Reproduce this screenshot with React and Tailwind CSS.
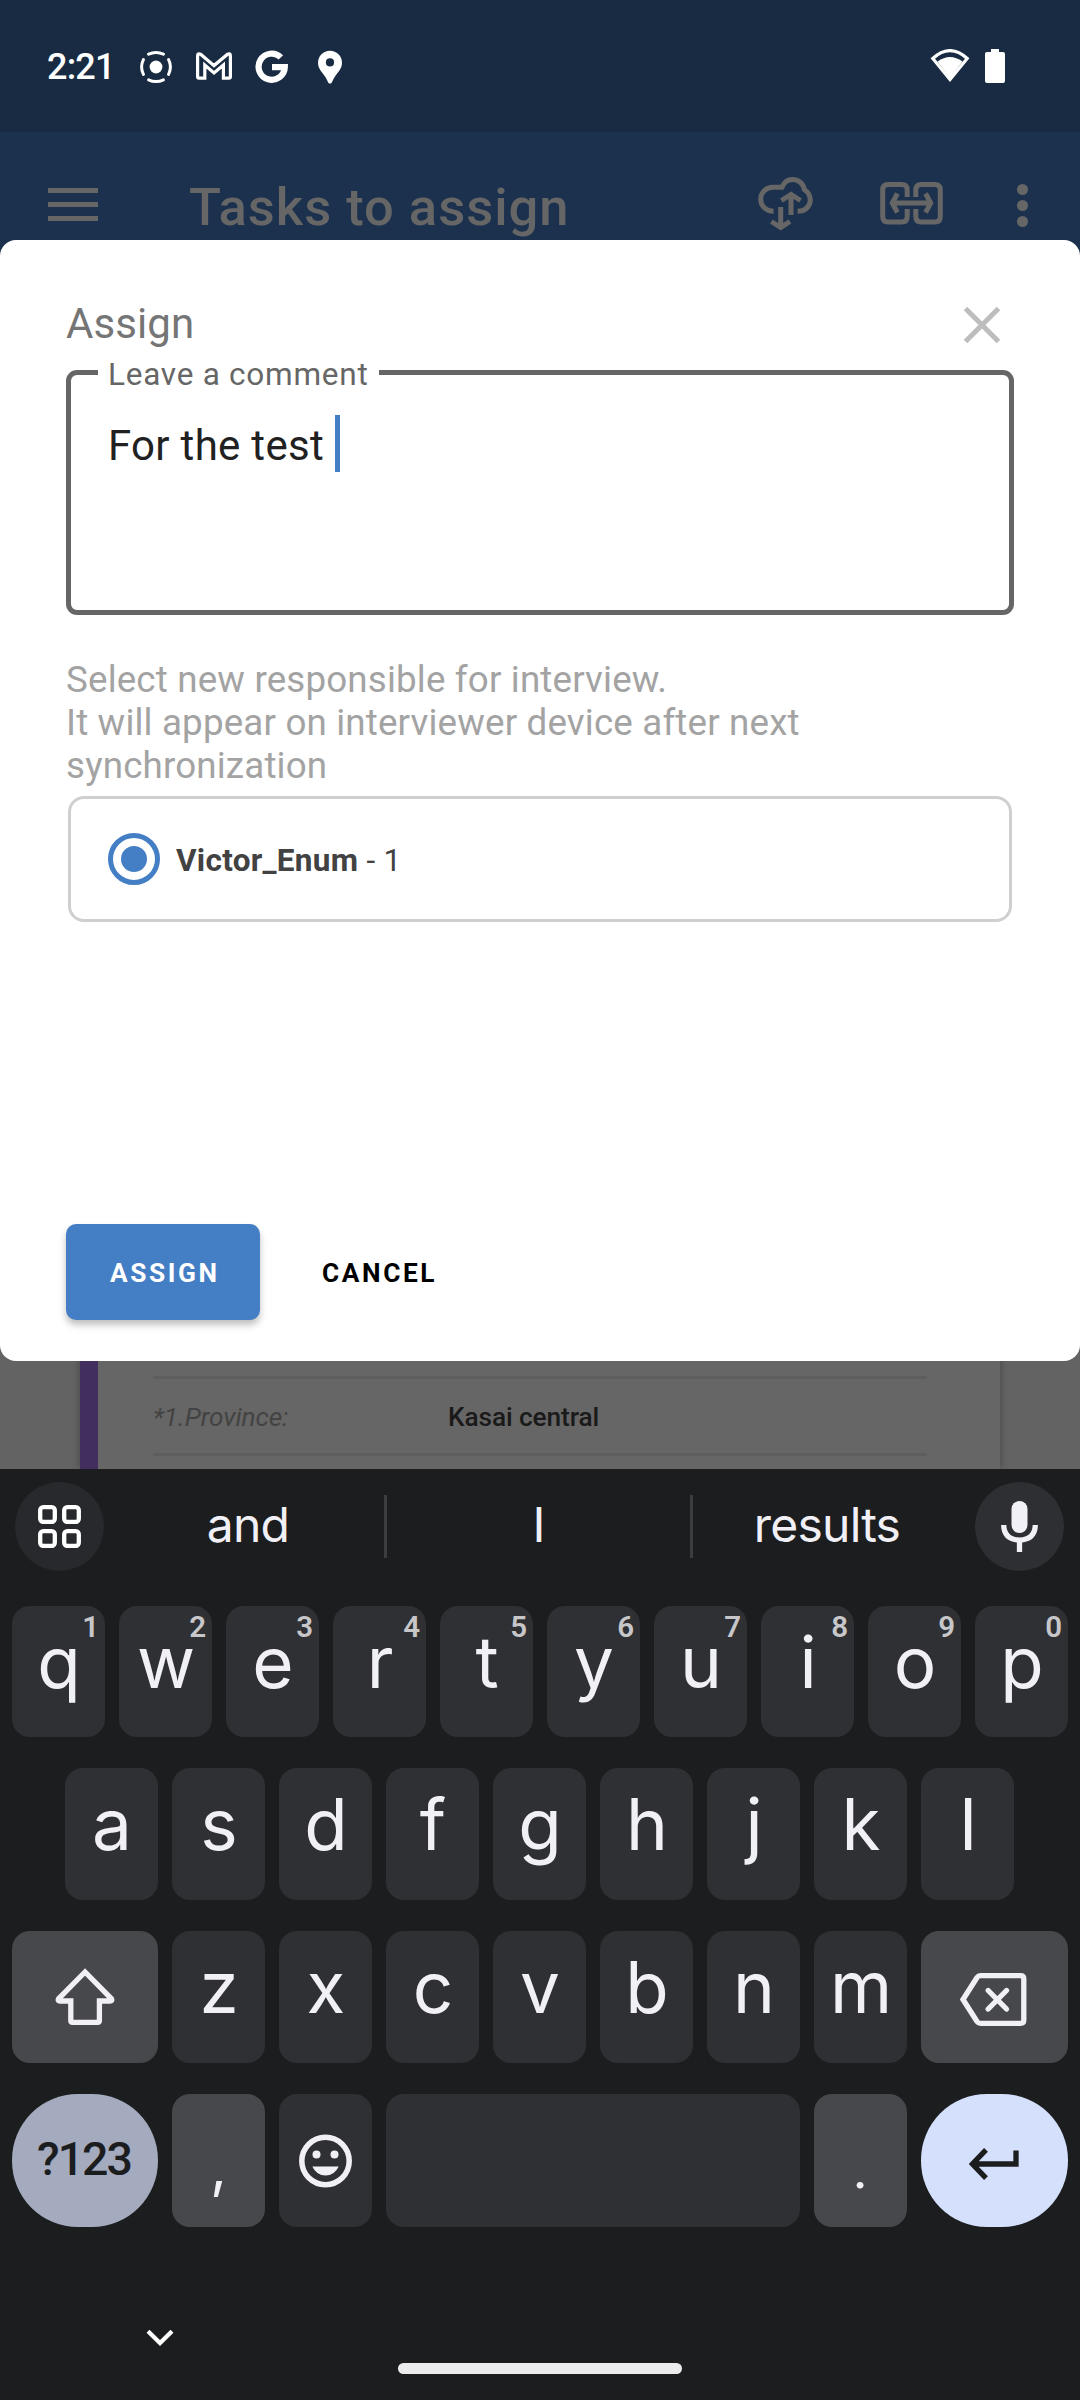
import React from "react";

function StatusBar() {
  return (
    <div className="flex h-[132px] items-start bg-[#182b42] pl-[47px] pr-[75px] text-white">
      <span className="mt-[44px] w-[93px] whitespace-nowrap text-[36px] font-medium leading-[46px] tracking-[-0.8px]">2:21</span>
      <svg className="mt-[50px] h-[34px] w-[34px]" viewBox="0 0 34 34" fill="none">
        <circle cx="16" cy="17" r="6.4" fill="#fff" />
        <path
          d="M8.6 4.2Q16 0.6 23.4 4.2M8.6 29.8Q16 33.4 23.4 29.8M3.4 9.6Q-0.2 17 3.4 24.4M28.6 9.6Q32.2 17 28.6 24.4"
          stroke="#fff"
          strokeWidth="3"
          strokeLinecap="round"
        />
      </svg>
      <svg className="ml-[22px] mt-[52px] h-7 w-9" viewBox="0 0 36 28" fill="none" stroke="#fff" strokeWidth="3.2">
        <path d="M1.6 4Q1.6 0.8 4.6 2.2L18 13.6L31.6 2.2Q34.4 0.8 34.4 4V24.8Q34.4 26.2 33 26.2H27.4V13L18 21L8.8 13V26.2H2.9Q1.6 26.2 1.6 24.8Z" />
      </svg>
      <svg className="ml-[23px] mt-[50px] h-[34px] w-[34px]" viewBox="0 0 34 34" fill="none" stroke="#fff" strokeWidth="6.2">
        <path d="M25.9 7.4A13.1 13.1 0 1 0 29.8 17.1H17" />
      </svg>
      <svg className="ml-[29px] mt-[50px] h-[34px] w-[24px]" viewBox="0 0 24 34" fill="#fff">
        <path
          fillRule="evenodd"
          d="M12 0.8A12 12 0 0 0 0 12.8C0 19 4.5 22.5 7 26.5C9 29.6 9.5 31.5 10.5 33Q12 34 13.5 33C14.5 31.5 15 29.6 17 26.5C19.5 22.5 24 19 24 12.8A12 12 0 0 0 12 0.8ZM12 8.3A4.1 4.1 0 1 1 12 16.5A4.1 4.1 0 0 1 12 8.3Z"
        />
      </svg>
      <svg className="ml-auto mt-[49px] h-[33px] w-10" viewBox="0 0 40 33" fill="none">
        <path d="M2.8 9.5Q20 -6.2 37.2 9.5L20 30.500Z" stroke="#fff" strokeWidth="3.2" />
        <path d="M7.5 12.5Q20 3.5 32.5 12.5L20 29Z" fill="#fff" />
      </svg>
      <svg className="ml-[15px] mt-[49px] h-[34px] w-5" viewBox="0 0 20 34" fill="#fff">
        <path d="M6 0H14V3H18Q20 3 20 5V32Q20 34 18 34H2Q0 34 0 32V5Q0 3 2 3H6Z" />
      </svg>
    </div>
  );
}

function AppBar() {
  return (
    <div className="flex h-[147px] items-start bg-[#1c314e] pl-12 pr-[52px] text-[#666]">
      <div className="mt-[56px] flex w-[50px] flex-col gap-[9px]">
        <div className="h-[5px] bg-[#666]" />
        <div className="h-[5px] bg-[#666]" />
        <div className="h-[5px] bg-[#666]" />
      </div>
      <h1 className="ml-[91px] mt-[45px] whitespace-nowrap text-[52.5px] font-medium leading-[60px] tracking-[0.98px]">
        Tasks to assign
      </h1>
      <svg className="ml-auto mt-[45px] h-[54px] w-14" viewBox="0 0 56 54" fill="none" stroke="#666" strokeWidth="5">
        <path d="M15.5 34.3C8 34.3 2.7 29 2.7 22.2C2.7 15.5 8 10.3 15 10.3H24C26 5.5 30 2.5 34.5 2.5C40 2.5 45.5 6.5 46.3 12.5C50 15 52.3 18.5 52.3 23C52.3 29.5 47 34.3 39.6 34.3" />
        <path d="M33 38V18M23.4 23.5L33 17.5L42.5 23.5M22.7 30V50M13.4 44.5L22.7 50.5L32 44.5" />
      </svg>
      <svg className="ml-[66px] mt-[50px] h-[43px] w-[63px]" viewBox="0 0 63 43" fill="none" stroke="#666" strokeWidth="5">
        <path d="M27.2 15V8Q27.2 2.5 21.7 2.5H8.2Q2.7 2.5 2.7 8V34.5Q2.7 40 8.2 40H21.7Q27.2 40 27.2 34.5V27M35.8 15V8Q35.8 2.5 41.3 2.5H54.8Q60.3 2.5 60.3 8V34.5Q60.3 40 54.8 40H41.3Q35.8 40 35.8 34.5V27" />
        <path d="M12 21H51M17.4 11.5L12.3 21L17.4 30.5M45.6 11.5L50.7 21L45.6 30.5" />
      </svg>
      <div className="ml-[74px] mt-[52px] flex flex-col gap-[5px]">
        <div className="h-[11px] w-[11px] rounded-full bg-[#666]" />
        <div className="h-[11px] w-[11px] rounded-full bg-[#666]" />
        <div className="h-[11px] w-[11px] rounded-full bg-[#666]" />
      </div>
    </div>
  );
}

function TaskList() {
  return (
    <div className="flex h-[1190px] bg-[#636363] px-20">
      <div className="flex w-full border-l-[18px] border-[#422f60] bg-[#666] shadow-[0_0_8px_rgba(0,0,0,0.3)]">
        <div className="ml-[55px] mt-auto mb-[13px] flex h-[80px] w-[774px] items-center border-y-[3px] border-[#5e5e5e] pt-[2px] text-[26.25px] leading-[30px] tracking-[-0.1px]">
          <span className="w-[295px] italic text-[#434343]">*1.Province:</span>
          <span className="font-medium text-[#1a1a1a]">Kasai central</span>
        </div>
      </div>
    </div>
  );
}

function AssignDialog() {
  return (
    <div className="absolute left-0 top-[240px] flex h-[1121px] w-full flex-col rounded-2xl bg-white px-[66px]">
      <div className="mt-[59px] flex h-[71px] items-start">
        <h2 className="text-[42px] leading-[49px] tracking-[0.1px] text-[#757575]">Assign</h2>
        <svg className="ml-auto mr-[13px] mt-[7px] h-[38px] w-[38px]" viewBox="0 0 38 38" stroke="#bdbdbd" strokeWidth="5">
          <path d="M2.5 2.5L35.5 35.5M35.5 2.5L2.5 35.5" />
        </svg>
      </div>
      <div className="relative flex h-[245px] items-start rounded-[11px] border-[5px] border-[#666] pl-[37px] pt-10">
        <span className="absolute -top-[21px] left-[27px] w-[281px] whitespace-nowrap bg-white pl-[10px] text-[31.5px] leading-[41px] tracking-[0.75px] text-[#666]">
          Leave a comment
        </span>
        <span className="mt-[2px] whitespace-pre text-[42px] leading-[57px] tracking-[0.3px] text-[#212121]">For the test </span>
        <span className="h-[57px] w-[5px] bg-[#447fc5]" />
      </div>
      <p className="mt-[43px] w-[860px] text-[36.75px] leading-[43px] tracking-[0.16px] text-[#a3a3a3]">
        Select new responsible for interview.
        <br />
        It will appear on interviewer device after next synchronization
      </p>
      <div className="mx-[2px] mt-[9px] flex h-[126px] items-center rounded-2xl border-[3px] border-[#cfcfcf] pl-[37px]">
        <div className="flex h-[52px] w-[52px] items-center justify-center rounded-full border-[5px] border-[#447fc5]">
          <div className="h-[26px] w-[26px] rounded-full bg-[#447fc5]" />
        </div>
        <p className="ml-4 mt-[3px] text-[31.5px] leading-[37px] tracking-[0.28px] text-[#424242]">
          <b className="font-bold">Victor_Enum</b> - 1
        </p>
      </div>
      <div className="mt-auto mb-[41px] flex text-[26.25px] font-bold leading-[99px] tracking-[2.6px]">
        <div className="h-24 w-[194px] rounded-[10px] bg-[#447fc5] pl-11 text-white shadow-[0_5px_7px_rgba(0,0,0,0.25)]">ASSIGN</div>
        <div className="ml-[62px] h-24 text-black">CANCEL</div>
      </div>
    </div>
  );
}

function LetterKey({ letter, hint }) {
  return (
    <div className="relative h-full w-[93px] rounded-[18px] bg-[#2f3034] pl-px text-center font-['Inter',sans-serif] text-[71px] leading-[113px] text-[#f1f0f6]">
      {letter}
      {hint && (
        <span className="absolute right-[6px] top-1 font-['Roboto',sans-serif] text-[29.5px] font-semibold leading-[34px] text-[#c7c7c9]">
          {hint}
        </span>
      )}
    </div>
  );
}

function Keyboard() {
  return (
    <div className="flex h-[931px] flex-col bg-[#1c1d1e]">
      <div className="flex h-[115px] items-center pl-[15px] pr-4">
        <div className="flex h-[89px] w-[89px] shrink-0 items-center justify-center rounded-full bg-[#27292d]">
          <svg className="h-[43px] w-[43px]" viewBox="0 0 43 43" fill="none" stroke="#fff" strokeWidth="4.3">
            <rect x="2.2" y="2.2" width="14.6" height="14.6" rx="3" />
            <rect x="26.2" y="2.2" width="14.6" height="14.6" rx="3" />
            <rect x="2.2" y="26.2" width="14.6" height="14.6" rx="3" />
            <rect x="26.2" y="26.2" width="14.6" height="14.6" rx="3" />
          </svg>
        </div>
        <div className="flex min-w-0 flex-1 items-center text-center font-['Inter',sans-serif] text-[48px] leading-[60px] tracking-[-0.8px] text-[#f1f0f6]">
          <span className="-mt-[3px] w-[280px] pl-2">and</span>
          <div className="h-[63px] w-[3px] bg-[#3c3d40]" />
          <span className="-mt-[3px] w-[303px]">I</span>
          <div className="h-[63px] w-[3px] bg-[#3c3d40]" />
          <span className="-mt-[3px] w-[282px] pr-[14px]">results</span>
        </div>
        <div className="flex h-[89px] w-[89px] shrink-0 items-center justify-center rounded-full bg-[#2e2f33]">
          <svg className="h-[51px] w-[37px]" viewBox="0 0 37 51" fill="none" stroke="#f1f0f6" strokeWidth="5.3">
            <rect x="10.5" y="0" width="16" height="32" rx="8" fill="#f1f0f6" stroke="none" />
            <path d="M2.7 24Q3 38.5 18.5 39.2Q34 38.5 34.3 24M18.5 39V51" />
          </svg>
        </div>
      </div>

      <div className="mt-[22px] flex h-[131px] justify-center gap-[14px]">
        {"qwertyuiop".split("").map((c, i) => (
          <LetterKey key={c} letter={c} hint={String((i + 1) % 10)} />
        ))}
      </div>
      <div className="mt-[31px] flex h-[132px] justify-center gap-[14px] pr-px">
        {"asdfghjkl".split("").map((c) => (
          <LetterKey key={c} letter={c} />
        ))}
      </div>
      <div className="mt-[31px] flex h-[132px] justify-center gap-[14px]">
        <div className="flex w-[146px] items-center justify-center rounded-[18px] bg-[#47484b]">
          <svg className="h-[58px] w-[60px]" viewBox="0 0 60 58" fill="none" stroke="#f1f0f6" strokeWidth="5.3">
            <path d="M30 4L3.5 30.8Q2.5 33 5 33H15.8V52.5Q15.8 54.3 17.6 54.3H42.6Q44.4 54.3 44.4 52.5V33H55Q57.5 33 56.5 30.8Z" />
          </svg>
        </div>
        {"zxcvbnm".split("").map((c) => (
          <LetterKey key={c} letter={c} />
        ))}
        <div className="flex w-[147px] items-center justify-center rounded-[18px] bg-[#47484b] pr-[2px]">
          <svg className="mt-[5px] h-[53px] w-[67px]" viewBox="0 0 67 53" fill="none" stroke="#f1f0f6" strokeWidth="5.3">
            <path d="M3 26.5L17 4.5Q18.3 2.7 20.5 2.7H60.5Q63.8 2.7 63.8 6V47Q63.8 50.3 60.5 50.3H20.5Q18.3 50.3 17 48.5Z" />
            <path d="M28.2 17.5L46.5 36M46.5 17.5L28.2 36" strokeLinecap="round" />
          </svg>
        </div>
      </div>
      <div className="mt-[31px] flex h-[133px] justify-center gap-[14px] text-[#f1f0f6]">
        <div className="w-[146px] rounded-[66px] bg-[#a4abbf] pr-[2px] text-center text-[46.5px] font-medium leading-[130px] tracking-[-2px] text-[#1c1d1e]">
          ?123
        </div>
        <div className="w-[93px] rounded-[18px] bg-[#47484b] text-center font-['Inter',sans-serif] text-[58px] leading-[145px]">,</div>
        <div className="flex w-[93px] items-center justify-center rounded-[18px] bg-[#2f3034]">
          <svg className="h-[54px] w-[54px]" viewBox="0 0 54 54" fill="#f1f0f6">
            <circle cx="26.5" cy="27" r="23.7" fill="none" stroke="#f1f0f6" strokeWidth="5.5" />
            <circle cx="17.5" cy="20.5" r="4" />
            <circle cx="35.5" cy="20.5" r="4" />
            <path d="M13.3 32.5H39.7Q35.5 41.5 26.5 41.5T13.3 32.5Z" />
          </svg>
        </div>
        <div className="w-[414px] rounded-[18px] bg-[#2f3034]" />
        <div className="w-[93px] rounded-[18px] bg-[#47484b] text-center font-['Roboto',sans-serif] text-[60px] leading-[147px]">.</div>
        <div className="flex w-[147px] items-center justify-center rounded-[66px] bg-[#d5e1fc] pr-[2px]">
          <svg className="mt-[6px] h-8 w-[50px]" viewBox="0 0 50 32" fill="none" stroke="#1c1d1e" strokeWidth="5.3">
            <path d="M17 1.8L3.5 16L17 30.2M4 16H47V2.5" />
          </svg>
        </div>
      </div>
      <svg className="ml-[146px] mt-[103px] h-4 w-7" viewBox="0 0 28 16" fill="none" stroke="#fff" strokeWidth="4.2">
        <path d="M2 1.2L14 13L26 1.2" />
      </svg>
      <div className="mx-auto mt-[17px] h-[11px] w-[284px] rounded-full bg-[#ececec]" />
    </div>
  );
}

export default function App() {
  return (
    <div className="relative flex h-[2400px] w-[1080px] flex-col overflow-hidden font-['Roboto',sans-serif]">
      <StatusBar />
      <AppBar />
      <TaskList />
      <AssignDialog />
      <Keyboard />
    </div>
  );
}
